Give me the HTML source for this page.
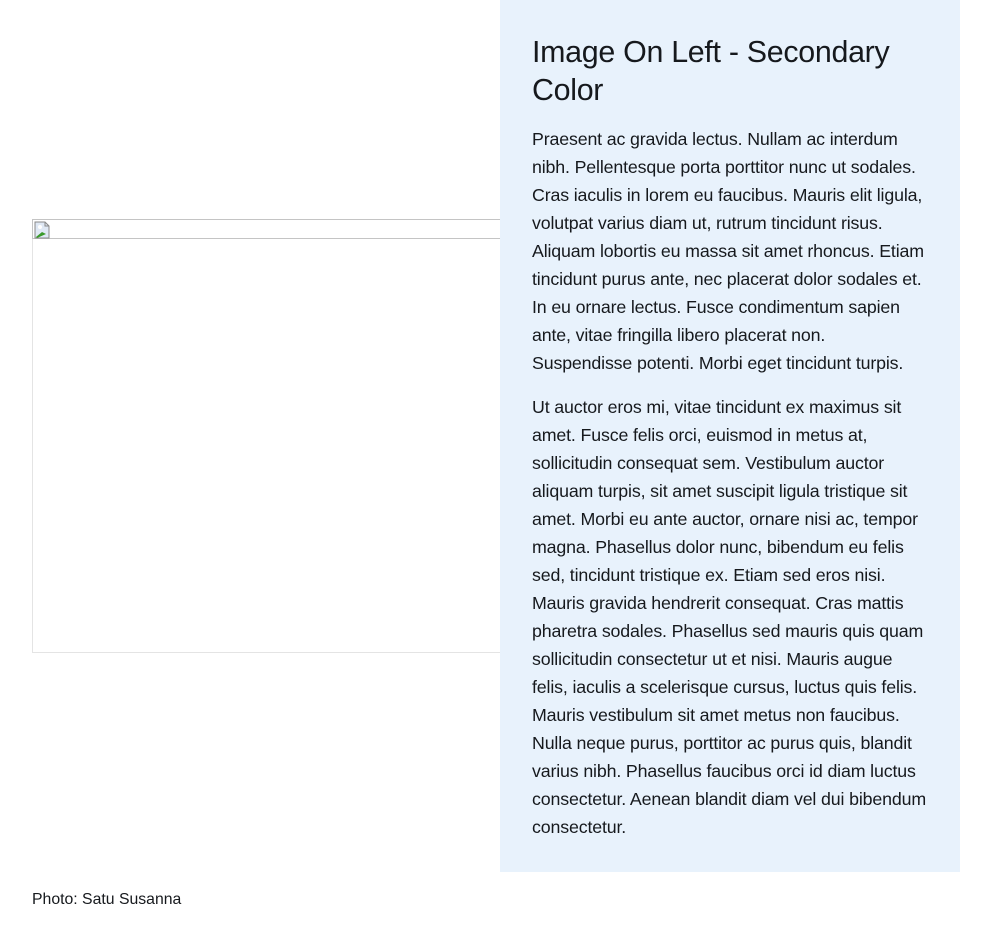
<!DOCTYPE html>
<html><head><meta charset="utf-8"><style>
html,body{margin:0;padding:0;background:#fff;width:992px;height:928px;overflow:hidden;font-family:"Liberation Sans",sans-serif;color:#16191d}
.img{position:absolute;left:32px;top:219px;width:468px;height:434px;border:1px solid #e4e4e4;border-right:none;box-sizing:border-box}
.img .bar{position:absolute;left:-1px;top:-1px;right:0;height:20px;border-bottom:1px solid #c4c4c4;border-top:1px solid #c4c4c4;box-sizing:border-box;border-left:1px solid #c4c4c4}
.ico{position:absolute;left:1px;top:1px}
.panel{position:absolute;left:500px;top:0;width:460px;height:872px;background:#e8f2fc}
h1{position:absolute;left:32px;top:33px;margin:0;font-weight:400;font-size:30.4px;line-height:38px;letter-spacing:-0.3px;white-space:nowrap}
.p{position:absolute;left:32px;margin:0;font-size:17.8px;line-height:28px;white-space:nowrap;letter-spacing:-0.15px}
.cap{position:absolute;left:32px;top:890px;font-size:15.8px;line-height:20px}
</style></head><body>
<div class="img"><div class="bar"></div>
<svg class="ico" width="16" height="18" viewBox="0 0 16 18"><path d="M1 1h10l4 4v12H1z" fill="#dfe8f4" stroke="#888"/><path d="M11 1v4h4" fill="none" stroke="#888"/><path d="M2 16l6-5 4 2-9 4z" fill="#3a9a2a"/><circle cx="6" cy="6" r="2" fill="#fff"/></svg>
</div>
<div class="panel">
<h1>Image On Left - Secondary<br>Color</h1>
<p class="p" style="top:125px">Praesent ac gravida lectus. Nullam ac interdum<br>nibh. Pellentesque porta porttitor nunc ut sodales.<br>Cras iaculis in lorem eu faucibus. Mauris elit ligula,<br>volutpat varius diam ut, rutrum tincidunt risus.<br>Aliquam lobortis eu massa sit amet rhoncus. Etiam<br>tincidunt purus ante, nec placerat dolor sodales et.<br>In eu ornare lectus. Fusce condimentum sapien<br>ante, vitae fringilla libero placerat non.<br>Suspendisse potenti. Morbi eget tincidunt turpis.</p>
<p class="p" style="top:393px">Ut auctor eros mi, vitae tincidunt ex maximus sit<br>amet. Fusce felis orci, euismod in metus at,<br>sollicitudin consequat sem. Vestibulum auctor<br>aliquam turpis, sit amet suscipit ligula tristique sit<br>amet. Morbi eu ante auctor, ornare nisi ac, tempor<br>magna. Phasellus dolor nunc, bibendum eu felis<br>sed, tincidunt tristique ex. Etiam sed eros nisi.<br>Mauris gravida hendrerit consequat. Cras mattis<br>pharetra sodales. Phasellus sed mauris quis quam<br>sollicitudin consectetur ut et nisi. Mauris augue<br>felis, iaculis a scelerisque cursus, luctus quis felis.<br>Mauris vestibulum sit amet metus non faucibus.<br>Nulla neque purus, porttitor ac purus quis, blandit<br>varius nibh. Phasellus faucibus orci id diam luctus<br>consectetur. Aenean blandit diam vel dui bibendum<br>consectetur.</p>
</div>
<div class="cap">Photo: Satu Susanna</div>
</body></html>
